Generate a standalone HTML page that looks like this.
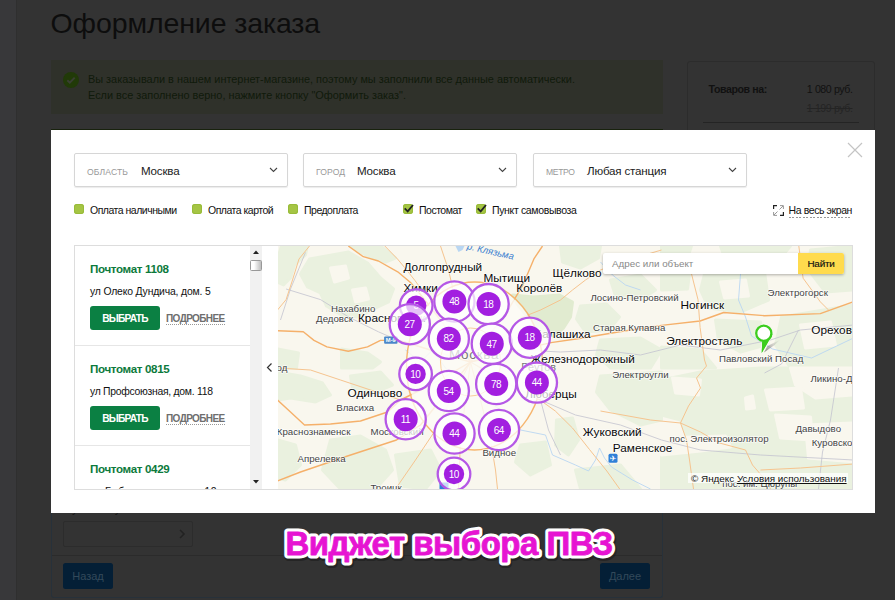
<!DOCTYPE html>
<html lang="ru"><head><meta charset="utf-8"><title>Оформление заказа</title>
<style>
html,body{margin:0;padding:0}
body{width:895px;height:600px;overflow:hidden;position:relative;background:#333;font-family:"Liberation Sans",Arial,sans-serif;color:#111}
.abs{position:absolute}
#strip{left:0;top:0;width:16px;height:600px;background:#38383a;border-right:1px solid #2f2f2f}
h1{position:absolute;left:50.500px;top:5px;margin:0;font-weight:400;font-size:28.5px;line-height:36px;color:#0d0d0d;white-space:nowrap;letter-spacing:-.1px}
#alert{left:51px;top:60px;width:612px;height:53.500px;background:#2f312a}
#alert .ic{position:absolute;left:12px;top:12px;width:16px;height:16px;border-radius:50%;background:#213a08}
#alert p{position:absolute;left:37px;margin:0;font-size:10.9px;line-height:14px;color:#0f1a0b;white-space:nowrap;letter-spacing:0}
#side{left:686.500px;top:60.500px;width:188.500px;height:200px;border:1px solid #2c2c2c;border-radius:3px;background:#333;box-sizing:border-box}
#side .l{position:absolute;left:21px;top:21px;font-size:10.6px;font-weight:700;color:#111;letter-spacing:-.4px}
#side .r{position:absolute;right:21.500px;top:21px;font-size:10.6px;color:#111;letter-spacing:-.4px}
#side .o{position:absolute;right:21.500px;top:40px;font-size:10.6px;color:#242424;text-decoration:line-through;letter-spacing:-.4px}
#side .hr{position:absolute;left:15px;right:15px;top:60px;height:1px;background:#242424}
#form{left:51px;top:500px;width:612px;height:98px;border:1px solid #27313a;border-top:0;box-sizing:border-box;border-radius:0 0 3px 3px}
#form .sel{position:absolute;left:11px;top:21px;width:128px;height:24px;border:1px solid #2c2c2c;border-radius:2px;background:#333}
#form .hr{position:absolute;left:0;right:0;top:55px;height:1px;background:#2b2b2b}
.btn{position:absolute;top:563px;width:50px;height:26px;border-radius:2.500px;background:#041f36;color:#33495a;font-size:11px;line-height:26px;text-align:center}
#modal{left:51px;top:130px;width:824px;height:383px;background:#fff}
.dd{position:absolute;top:23px;width:212px;height:32px;border:1px solid #d6d6d6;border-radius:2px;box-shadow:0 1px 1px rgba(0,0,0,.08);box-sizing:content-box}
.dd .k{position:absolute;left:12px;top:12px;font-size:8.6px;line-height:12px;color:#999;letter-spacing:.1px}
.dd .v{position:absolute;top:10px;font-size:11.6px;line-height:14px;color:#222;letter-spacing:-.2px}
.dd svg{position:absolute;right:9px;top:13px}
.cb{position:absolute;top:73px;font-size:10.5px;line-height:14px;letter-spacing:-.5px;color:#111;white-space:nowrap}
.cb i{position:absolute;left:-16px;top:1px;width:10px;height:10px;border-radius:3px;background:#a5c544;box-shadow:inset 0 0 0 1px #98bb3a}
#wrap{left:23px;top:115px;width:777px;height:243px;border:1px solid #ddd}
#list{left:0;top:0;width:175px;height:243px;overflow:hidden}
.it{position:absolute;left:0;width:175px;height:99px;border-bottom:1px solid #e6e6e6}
.it .t{position:absolute;left:15px;top:16px;font-size:11.6px;line-height:14px;font-weight:700;color:#0c7a3c;letter-spacing:-.35px;white-space:nowrap}
.it .a{position:absolute;left:15px;top:38.500px;font-size:10.4px;line-height:14px;color:#111;letter-spacing:-.28px;white-space:nowrap}
.it .b{position:absolute;left:15px;top:60px;width:70px;height:24px;border-radius:3px;background:#0b8043;color:#fff;font-size:10.2px;font-weight:700;line-height:25.500px;text-align:center;letter-spacing:-.75px}
.it .m{position:absolute;left:91px;top:67px;font-size:10px;font-weight:700;line-height:11px;color:#6e6e6e;letter-spacing:-.6px;border-bottom:1px dotted #999}
#sb{left:175px;top:0;width:11.500px;height:243px;background:#f1f1f1}
#sb .th{position:absolute;left:0;top:14px;width:9.500px;height:9px;border:1px solid #999;background:linear-gradient(90deg,#fff 30%,#bdbdbd);border-radius:1.500px}
#map{left:202.500px;top:0;width:574.500px;height:243px;overflow:hidden;background:#f8f6ee}
#map svg{position:absolute;left:0;top:0}
.hl{paint-order:stroke;stroke:#fff;stroke-width:1.6px;stroke-opacity:.7;stroke-linejoin:round}
#search{left:325.500px;top:7px;width:241px;height:21px;background:#fff;box-shadow:0 1px 3px rgba(0,0,0,.3);border-radius:2px}
#search span{position:absolute;left:9px;top:3.500px;font-size:9.8px;line-height:14px;color:#888;letter-spacing:0}
#search b{position:absolute;right:0;top:0;width:46px;height:21px;background:#ffdb4d;border-radius:0 2px 2px 0;font-size:9.9px;line-height:21px;text-align:center;color:#111;letter-spacing:-.2px;font-weight:400;-webkit-text-stroke:.18px #111}
#cap{left:270px;top:512px;width:360px;height:64px}
</style></head><body>
<div id="strip" class="abs"></div>
<h1>Оформление заказа</h1>
<div id="alert" class="abs"><span class="ic"><svg width="16" height="16" viewBox="0 0 16 16"><path d="M4.3 8.2l2.5 2.4 4.9-5" fill="none" stroke="#3a3f33" stroke-width="2"/></svg></span>
<p style="top:12px">Вы заказывали в нашем интернет-магазине, поэтому мы заполнили все данные автоматически.</p>
<p style="top:28px">Если все заполнено верно, нажмите кнопку "Оформить заказ".</p></div>
<div id="side" class="abs"><span class="l">Товаров на:</span><span class="r">1 080 руб.</span><span class="o">1 199 руб.</span><span class="hr"></span></div>
<div id="form" class="abs"><span style="position:absolute;left:12px;top:1.500px;font-size:11px;line-height:14px;color:#151515;white-space:nowrap">Пункт получения</span><span class="sel"><svg width="8" height="10" viewBox="0 0 8 10" style="position:absolute;right:6px;top:7px"><path d="M2 1l4 4-4 4" fill="none" stroke="#222" stroke-width="1.5"/></svg></span><span class="hr"></span></div>
<div class="btn" style="left:63px">Назад</div>
<div class="btn" style="left:600px">Далее</div>

<div class="abs" style="left:51px;top:128.600px;width:612px;height:1.500px;background:#18220d"></div>
<div id="modal" class="abs">
 <svg class="abs" style="left:796px;top:12px" width="16" height="16" viewBox="0 0 16 16"><path d="M1 1l14 14M15 1L1 15" stroke="#c4c4c4" stroke-width="1.2" fill="none"/></svg>
 <div class="dd" style="left:23px"><span class="k">ОБЛАСТЬ</span><span class="v" style="left:66px">Москва</span><svg width="9" height="6" viewBox="0 0 9 6"><path d="M1 1l3.5 3.5L8 1" fill="none" stroke="#444" stroke-width="1.1"/></svg></div>
 <div class="dd" style="left:252px"><span class="k">ГОРОД</span><span class="v" style="left:53px">Москва</span><svg width="9" height="6" viewBox="0 0 9 6"><path d="M1 1l3.5 3.5L8 1" fill="none" stroke="#444" stroke-width="1.1"/></svg></div>
 <div class="dd" style="left:482px"><span class="k" style="letter-spacing:-.35px">МЕТРО</span><span class="v" style="left:53px">Любая станция</span><svg width="9" height="6" viewBox="0 0 9 6"><path d="M1 1l3.5 3.5L8 1" fill="none" stroke="#444" stroke-width="1.1"/></svg></div>

 <span class="cb" style="left:39px"><i></i>Оплата наличными</span>
 <span class="cb" style="left:157px"><i></i>Оплата картой</span>
 <span class="cb" style="left:253px"><i></i>Предоплата</span>
 <span class="cb" style="left:368px"><i></i><svg class="abs" style="left:-16px;top:0" width="12" height="12" viewBox="0 0 12 12"><path d="M1.700 5.300l3 3L10 2" fill="none" stroke="#222" stroke-width="1.800"/></svg>Постомат</span>
 <span class="cb" style="left:441px;letter-spacing:-.35px"><i></i><svg class="abs" style="left:-16px;top:0" width="12" height="12" viewBox="0 0 12 12"><path d="M1.700 5.300l3 3L10 2" fill="none" stroke="#222" stroke-width="1.800"/></svg>Пункт самовывоза</span>
 <span class="cb" style="left:737.500px;letter-spacing:-.4px;line-height:13px;top:74px;padding-bottom:1px;background:repeating-linear-gradient(90deg,#999 0 2px,transparent 2px 3.500px) left bottom/100% 1px no-repeat"><svg class="abs" style="left:-15.500px;top:1px" width="11" height="11" viewBox="0 0 11 11"><path d="M.600 4V.600H4M10.400 7v3.400H7" fill="none" stroke="#222" stroke-width="1.200"/><path d="M7 .600h3.400V4M.600 7v3.400H4M10 1L6.500 4.500M1 10l3.500-3.500" fill="none" stroke="#999" stroke-width="1"/></svg>На весь экран</span>

 <div id="wrap" class="abs">
  <div id="list" class="abs">
   <div class="it" style="top:0"><span class="t">Почтомат 1108</span><span class="a" style="letter-spacing:-.17px">ул Олеко Дундича, дом. 5</span><span class="b">ВЫБРАТЬ</span><span class="m">ПОДРОБНЕЕ</span></div>
   <div class="it" style="top:100px"><span class="t">Почтомат 0815</span><span class="a">ул Профсоюзная, дом. 118</span><span class="b">ВЫБРАТЬ</span><span class="m">ПОДРОБНЕЕ</span></div>
   <div class="it" style="top:200px"><span class="t">Почтомат 0429</span><span class="a" style="top:39px;letter-spacing:.35px">ул Бибиревская, дом. 12</span><span class="b">ВЫБРАТЬ</span><span class="m">ПОДРОБНЕЕ</span></div>
  </div>
  <div id="sb" class="abs"><svg class="abs" style="left:3px;top:4px" width="6" height="4" viewBox="0 0 6 4"><path d="M0 4l3-3.500 3 3.500z" fill="#222"/></svg><span class="th"></span><svg class="abs" style="left:3px;top:234px" width="6" height="4" viewBox="0 0 6 4"><path d="M0 0l3 3.500 3-3.500z" fill="#222"/></svg></div>
  <svg class="abs" style="left:191px;top:116px" width="7" height="11" viewBox="0 0 7 11"><path d="M5.500 1.500L1.500 5.500 5.500 9.500" fill="none" stroke="#333" stroke-width="1.200"/></svg>
  <div id="map" class="abs">
   <svg width="575" height="243" viewBox="277.500 246 575 243" font-family="Liberation Sans, Arial, sans-serif">
<rect x="277" y="246" width="576" height="244" fill="#f9f7ee"/>
<polygon points="281,246 307,246 305,255 294,265 290,278 283,285 277,282 277,259" fill="#eaf1df" stroke="#eaf1df" stroke-width="3" stroke-linejoin="round"/>
<polygon points="309,259 348,252 367,263 380,278 393,289 388,302 371,310 358,317 341,315 326,306 320,293 307,287 300,274" fill="#eaf1df" stroke="#eaf1df" stroke-width="3" stroke-linejoin="round"/>
<polygon points="341,349 367,353 380,362 372,368 341,368" fill="#eaf1df" stroke="#eaf1df" stroke-width="3" stroke-linejoin="round"/>
<polygon points="277,349 298,353 296,368 277,368" fill="#eaf1df" stroke="#eaf1df" stroke-width="3" stroke-linejoin="round"/>
<polygon points="350,246 380,246 395,258 385,262 365,255" fill="#eaf1df" stroke="#eaf1df" stroke-width="3" stroke-linejoin="round"/>
<polygon points="277,372 300,376 322,383 330,395 315,402 290,398 277,400" fill="#eaf1df" stroke="#eaf1df" stroke-width="3" stroke-linejoin="round"/>
<polygon points="330,440 360,436 385,450 392,470 375,489 340,489 322,470" fill="#eaf1df" stroke="#eaf1df" stroke-width="3" stroke-linejoin="round"/>
<polygon points="277,440 295,445 300,465 285,480 277,478" fill="#eaf1df" stroke="#eaf1df" stroke-width="3" stroke-linejoin="round"/>
<polygon points="395,455 430,450 440,470 425,489 400,486" fill="#eaf1df" stroke="#eaf1df" stroke-width="3" stroke-linejoin="round"/>
<polygon points="350,376 380,372 392,385 375,392 352,388" fill="#eaf1df" stroke="#eaf1df" stroke-width="3" stroke-linejoin="round"/>
<polygon points="580,306 606,304 619,317 608,330 585,332 576,319" fill="#eaf1df" stroke="#eaf1df" stroke-width="3" stroke-linejoin="round"/>
<polygon points="560,246 600,246 598,258 580,268 562,262" fill="#eaf1df" stroke="#eaf1df" stroke-width="3" stroke-linejoin="round"/>
<polygon points="610,280 640,275 655,290 640,300 615,296" fill="#eaf1df" stroke="#eaf1df" stroke-width="3" stroke-linejoin="round"/>
<polygon points="600,340 640,338 661,350 650,368 610,368 596,355" fill="#eaf1df" stroke="#eaf1df" stroke-width="3" stroke-linejoin="round"/>
<polygon points="661,246 691,246 689,252 661,254" fill="#eaf1df" stroke="#eaf1df" stroke-width="3" stroke-linejoin="round"/>
<polygon points="661,274 689,274 687,289 661,290" fill="#eaf1df" stroke="#eaf1df" stroke-width="3" stroke-linejoin="round"/>
<polygon points="704,274 764,272 768,300 740,312 708,308 700,290" fill="#eaf1df" stroke="#eaf1df" stroke-width="3" stroke-linejoin="round"/>
<polygon points="781,317 853,305 853,368 790,368 775,345" fill="#eaf1df" stroke="#eaf1df" stroke-width="3" stroke-linejoin="round"/>
<polygon points="661,347 700,350 715,368 661,368" fill="#eaf1df" stroke="#eaf1df" stroke-width="3" stroke-linejoin="round"/>
<polygon points="810,250 853,246 853,290 825,292 808,270" fill="#eaf1df" stroke="#eaf1df" stroke-width="3" stroke-linejoin="round"/>
<polygon points="720,246 790,246 785,252 722,252" fill="#eaf1df" stroke="#eaf1df" stroke-width="3" stroke-linejoin="round"/>
<polygon points="556,420 572,418 578,440 568,455 555,445" fill="#eaf1df" stroke="#eaf1df" stroke-width="3" stroke-linejoin="round"/>
<polygon points="600,376 661,372 661,420 640,425 610,410 596,392" fill="#eaf1df" stroke="#eaf1df" stroke-width="3" stroke-linejoin="round"/>
<polygon points="520,445 545,442 550,465 530,475 515,462" fill="#eaf1df" stroke="#eaf1df" stroke-width="3" stroke-linejoin="round"/>
<polygon points="575,470 620,465 640,489 580,489" fill="#eaf1df" stroke="#eaf1df" stroke-width="3" stroke-linejoin="round"/>
<polygon points="661,380 700,372 760,368 853,368 853,489 661,489 661,455 690,445 680,420 661,415" fill="#eaf1df" stroke="#eaf1df" stroke-width="3" stroke-linejoin="round"/>
<polygon points="715,320 760,322 765,345 740,352 718,340" fill="#eaf1df" stroke="#eaf1df" stroke-width="3" stroke-linejoin="round"/>
<polygon points="512,295 533,297 559,295 572,302 570,317 563,328 553,336 540,332 529,319 520,310" fill="#e1ebd0" stroke="#e1ebd0" stroke-width="3" stroke-linejoin="round"/>
<polygon points="330,268 345,266 348,278 334,282" fill="#f9f7ee" stroke="#f9f7ee" stroke-width="3" stroke-linejoin="round"/>
<polygon points="352,290 365,288 368,299 355,302" fill="#f9f7ee" stroke="#f9f7ee" stroke-width="3" stroke-linejoin="round"/>
<polygon points="672,378 700,380 698,395 675,393" fill="#f9f7ee" stroke="#f9f7ee" stroke-width="3" stroke-linejoin="round"/>
<polygon points="765,390 800,388 803,408 770,410" fill="#f9f7ee" stroke="#f9f7ee" stroke-width="3" stroke-linejoin="round"/>
<polygon points="775,415 810,417 812,440 780,438" fill="#f9f7ee" stroke="#f9f7ee" stroke-width="3" stroke-linejoin="round"/>
<polygon points="790,368 853,368 853,395 815,398 795,385" fill="#f9f7ee" stroke="#f9f7ee" stroke-width="3" stroke-linejoin="round"/>
<polygon points="661,438 725,436 730,447 700,451 661,455" fill="#f9f7ee" stroke="#f9f7ee" stroke-width="3" stroke-linejoin="round"/>
<polygon points="805,425 853,423 853,462 808,458" fill="#f9f7ee" stroke="#f9f7ee" stroke-width="3" stroke-linejoin="round"/>
<polygon points="745,398 752,396 754,408 746,409" fill="#f9f7ee" stroke="#f9f7ee" stroke-width="3" stroke-linejoin="round"/>
<polygon points="800,325 830,322 835,345 805,348" fill="#f9f7ee" stroke="#f9f7ee" stroke-width="3" stroke-linejoin="round"/>
<polygon points="720,282 745,280 748,296 724,298" fill="#f9f7ee" stroke="#f9f7ee" stroke-width="3" stroke-linejoin="round"/>
<polygon points="455,246 464,246 462,250 458,252" fill="#b9d6f2"/>
<ellipse cx="474" cy="366" rx="64" ry="80" fill="#fbfaf4"/>
<polyline points="405,350 420,362 432,350 445,368 460,385 478,395 500,410 520,430 545,435 552,455 575,465 588,471 595,460 599,448 604,458 611,467 632,480 650,489" fill="none" stroke="#b9d6f2" stroke-width=".9" stroke-linejoin="round"/>
<polyline points="740,274 738,300 745,317 751,336 772,349 811,358 853,338" fill="none" stroke="#b9d6f2" stroke-width=".9" stroke-linejoin="round"/>
<polyline points="600,262 612,275 625,285 640,290" fill="none" stroke="#b9d6f2" stroke-width=".9" stroke-linejoin="round"/>
<polyline points="285.6,289 320,299.6 347.8,316.8 377.9,331.8 392.9,338.3 430,350" fill="none" stroke="#c3c3cf" stroke-width=".8" stroke-linejoin="round"/>
<polyline points="305,252.4 290,289 280,320" fill="none" stroke="#c3c3cf" stroke-width=".8" stroke-linejoin="round"/>
<polyline points="470,362 540,400 575,415 620,425 661,440 700,450 760,455 853,460" fill="none" stroke="#c3c3cf" stroke-width=".8" stroke-linejoin="round"/>
<polyline points="470,362 520,350 560,352 600,350 640,355 680,345 720,350 770,340 800,330 853,325" fill="none" stroke="#c3c3cf" stroke-width=".8" stroke-linejoin="round"/>
<polyline points="798,330 781,364 764,373" fill="none" stroke="#c3c3cf" stroke-width=".8" stroke-linejoin="round"/>
<polyline points="540,400 548,430 560,455" fill="none" stroke="#c3c3cf" stroke-width=".8" stroke-linejoin="round"/>
<polyline points="838,368 830,420 822,452 818,489" fill="none" stroke="#c3c3cf" stroke-width=".8" stroke-linejoin="round"/>
<polyline points="309,246 298.5,259 292,280 285.6,299.6 277,310" fill="none" stroke="#f6c48f" stroke-width="1" stroke-linejoin="round"/>
<polyline points="277,330.8 302.8,331.8 313.5,340.4 326.4,346.9 347.8,351.2 367,346.9 380,340.4 397,340.4 405.8,342.6 430,350 470,362" fill="none" stroke="#f5b06a" stroke-width="1.4" stroke-linejoin="round"/>
<polyline points="347.8,246 362.8,256.7 377.9,261 397.2,271.8 410,282.5 418,292 440,320 470,362" fill="none" stroke="#f5b06a" stroke-width="1.4" stroke-linejoin="round"/>
<polyline points="384.3,246 397,259 405.8,269.6 414.3,280.3 425,295" fill="none" stroke="#f6c48f" stroke-width="1" stroke-linejoin="round"/>
<polyline points="440,246 448,270 455,300 465,340 470,362" fill="none" stroke="#f6c48f" stroke-width="1" stroke-linejoin="round"/>
<polyline points="542,246 533.4,258.9 522.6,284.6 507.6,310 485,340 470,362" fill="none" stroke="#f5b06a" stroke-width="1.4" stroke-linejoin="round"/>
<polyline points="470,362 505,335 520,318 540,310 560,300 572,290 585,280 600,270 620,262 661,250" fill="none" stroke="#f6c48f" stroke-width="1" stroke-linejoin="round"/>
<polyline points="470,362 510,352 550.5,342.6 580.6,338.3 619,331.8 661,325.4 699.6,321 723.2,312.5 764,315.7 819.8,313.6 853,301.8" fill="none" stroke="#f5b06a" stroke-width="1.4" stroke-linejoin="round"/>
<polyline points="691,273.9 697.5,299.6 699.6,327.5 704,360 706,366 696,378 700,388 688,406 680,423 686,440 689,460 693,489" fill="none" stroke="#f6c48f" stroke-width="1" stroke-linejoin="round"/>
<polyline points="600,411 650,420 680,423" fill="none" stroke="#f6c48f" stroke-width="1" stroke-linejoin="round"/>
<polyline points="680,423 700,432 719,443 745,450 752,465 765,480 770,489" fill="none" stroke="#f6c48f" stroke-width="1" stroke-linejoin="round"/>
<polyline points="798.3,246 802.6,278.2 819.8,301.8 828.4,310.4" fill="none" stroke="#f6c48f" stroke-width="1" stroke-linejoin="round"/>
<polyline points="470,362 500,380 539.8,400.2 554.8,411 572,428 589,449.5 606.3,471 619.2,489" fill="none" stroke="#f6c48f" stroke-width="1" stroke-linejoin="round"/>
<polyline points="470,362 480,400 490,440 495,470 497,489" fill="none" stroke="#f6c48f" stroke-width="1" stroke-linejoin="round"/>
<polyline points="470,362 465,400 460,440 458,489" fill="none" stroke="#f6c48f" stroke-width="1" stroke-linejoin="round"/>
<polyline points="470,362 450,400 435,430 415,460 395,489" fill="none" stroke="#f6c48f" stroke-width="1" stroke-linejoin="round"/>
<polyline points="470,362 440,400 420,425 396,440 344,457 300,472 277,481" fill="none" stroke="#f5b06a" stroke-width="1.4" stroke-linejoin="round"/>
<polyline points="470,362 430,385 400,400 387,412 360,421 330,424 304,425 290,412 277,400" fill="none" stroke="#f5b06a" stroke-width="1.4" stroke-linejoin="round"/>
<polyline points="400,400 370,390 340,380 310,370 277,368" fill="none" stroke="#f6c48f" stroke-width="1" stroke-linejoin="round"/>
<polyline points="760,470 800,468 853,464" fill="none" stroke="#f6c48f" stroke-width="1" stroke-linejoin="round"/>
<ellipse cx="474" cy="366" rx="67" ry="83" fill="#fbfaf4" fill-opacity=".85"/>
<ellipse cx="474" cy="366" rx="68" ry="84" fill="none" stroke="#f6b56e" stroke-width="1.4"/>
<ellipse cx="470" cy="362" rx="30" ry="34" fill="none" stroke="#f8cf9d" stroke-width="1"/>
<text x="403" y="271" font-size="11.8" fill="#0a0a0a" text-anchor="start" class="hl">Долгопрудный</text>
<text x="403" y="292" font-size="11.8" fill="#0a0a0a" text-anchor="start" class="hl">Химки</text>
<text x="483" y="281.5" font-size="11.8" fill="#0a0a0a" text-anchor="start" class="hl">Мытищи</text>
<text x="515.8" y="292" font-size="11.8" fill="#0a0a0a" text-anchor="start" class="hl">Королёв</text>
<text x="552" y="276.7" font-size="11.8" fill="#0a0a0a" text-anchor="start" class="hl">Щёлково</text>
<text x="357.5" y="322" font-size="11.8" fill="#0a0a0a" text-anchor="start" class="hl">Красногорск</text>
<text x="534" y="338.3" font-size="11.8" fill="#0a0a0a" text-anchor="start" class="hl">Балашиха</text>
<text x="530" y="363" font-size="11.8" fill="#0a0a0a" text-anchor="start" class="hl">Железнодорожный</text>
<text x="576.3" y="398" font-size="11.8" fill="#0a0a0a" text-anchor="end" class="hl">Люберцы</text>
<text x="347" y="397" font-size="11.8" fill="#0a0a0a" text-anchor="start" class="hl">Одинцово</text>
<text x="582.3" y="436.2" font-size="11.8" fill="#0a0a0a" text-anchor="start" class="hl">Жуковский</text>
<text x="612.3" y="451.7" font-size="11.8" fill="#0a0a0a" text-anchor="start" class="hl">Раменское</text>
<text x="680" y="309.3" font-size="11.8" fill="#0a0a0a" text-anchor="start" class="hl">Ногинск</text>
<text x="665.7" y="344.7" font-size="11.8" fill="#0a0a0a" text-anchor="start" class="hl">Электросталь</text>
<text x="810.8" y="334" font-size="11.8" fill="#0a0a0a" text-anchor="start" class="hl">Орехово-Зуево</text>
<text x="330.6" y="312" font-size="9.7" fill="#444" text-anchor="start" class="hl">Нахабино</text>
<text x="315.6" y="321.5" font-size="9.7" fill="#444" text-anchor="start" class="hl">Дедовск</text>
<text x="335.7" y="410.6" font-size="9.7" fill="#444" text-anchor="start" class="hl">Власиха</text>
<text x="349.9" y="435" font-size="9.7" fill="#444" text-anchor="end" class="hl">Краснознаменск</text>
<text x="370" y="435" font-size="9.7" fill="#444" text-anchor="start" class="hl">Московский</text>
<text x="297" y="462.4" font-size="9.7" fill="#444" text-anchor="start" class="hl">Апрелевка</text>
<text x="370" y="490.5" font-size="9.7" fill="#444" text-anchor="start" class="hl">Троицк</text>
<text x="590" y="301.4" font-size="9.7" fill="#444" text-anchor="start" class="hl">Лосино-Петровский</text>
<text x="592.4" y="331.4" font-size="9.7" fill="#444" text-anchor="start" class="hl">Старая Купавна</text>
<text x="611.7" y="377.7" font-size="9.7" fill="#444" text-anchor="start" class="hl">Электроугли</text>
<text x="767" y="295.8" font-size="9.7" fill="#444" text-anchor="start" class="hl">Электрогорск</text>
<text x="718.5" y="361.9" font-size="9.7" fill="#444" text-anchor="start" class="hl">Павловский Посад</text>
<text x="810" y="382" font-size="9.7" fill="#444" text-anchor="start" class="hl">Ликино-Дулёво</text>
<text x="795" y="432" font-size="9.7" fill="#444" text-anchor="start" class="hl">Давыдово</text>
<text x="811.2" y="445.7" font-size="9.7" fill="#444" text-anchor="start" class="hl">Куровское</text>
<text x="669" y="441.6" font-size="9.7" fill="#444" text-anchor="start" class="hl">пос. Электроизолятор</text>
<text x="721.7" y="487" font-size="9.7" fill="#444" text-anchor="start" class="hl">пос. им. Цюрупы</text>
<text x="481.9" y="456.4" font-size="9.7" fill="#444" text-anchor="start" class="hl">Видное</text>
<text x="286.9" y="371.2" font-size="9.7" fill="#444" text-anchor="end" class="hl">Звенигород</text>
<text x="466" y="249" font-size="9.500" fill="#3b7fd0" font-style="italic" transform="rotate(13 466 249)">р. Клязьма</text>
<text x="448.400" y="358.500" font-size="13.500" fill="#777" letter-spacing=".7" class="hl">Москва</text>
<text x="520.800" y="371" font-size="10.800" fill="#777" class="hl">Реутов</text>
<rect x="383.600" y="336.500" width="13.400" height="7.200" rx="1" fill="#4b87c9"/><text x="390.300" y="342.300" font-size="5.800" font-weight="700" fill="#fff" text-anchor="middle">М-9</text>
<rect x="608" y="453.800" width="9" height="9" rx="1.500" fill="#2f80d8"/><text x="612.500" y="461.300" font-size="8" fill="#fff" text-anchor="middle" font-family="DejaVu Sans, sans-serif">✈</text>
<rect x="439" y="482.500" width="9" height="7" rx="1" fill="#2f80d8"/>
<g><circle cx="415.7" cy="305.59999999999997" r="16.3" fill="#fff" fill-opacity=".72" stroke="#b558e6" stroke-width="2.3"/><circle cx="415.7" cy="305.59999999999997" r="10.2" fill="#a21fe0"/><text x="415.7" y="309.29999999999995" text-anchor="middle" font-size="10" letter-spacing="-.6" fill="#fff" dx="-.3">5</text></g>
<g><circle cx="453.9" cy="301.5" r="20.1" fill="#fff" fill-opacity=".72" stroke="#b558e6" stroke-width="2.3"/><circle cx="453.9" cy="301.5" r="12" fill="#a21fe0"/><text x="453.9" y="305.2" text-anchor="middle" font-size="10" letter-spacing="-.6" fill="#fff" dx="-.3">48</text></g>
<g><circle cx="488.1" cy="304.09999999999997" r="20.1" fill="#fff" fill-opacity=".72" stroke="#b558e6" stroke-width="2.3"/><circle cx="488.1" cy="304.09999999999997" r="12" fill="#a21fe0"/><text x="488.1" y="307.79999999999995" text-anchor="middle" font-size="10" letter-spacing="-.6" fill="#fff" dx="-.3">18</text></g>
<g><circle cx="409.3" cy="324.2" r="20.1" fill="#fff" fill-opacity=".72" stroke="#b558e6" stroke-width="2.3"/><circle cx="409.3" cy="324.2" r="12" fill="#a21fe0"/><text x="409.3" y="327.9" text-anchor="middle" font-size="10" letter-spacing="-.6" fill="#fff" dx="-.3">27</text></g>
<g><circle cx="448.3" cy="338.7" r="20.1" fill="#fff" fill-opacity=".72" stroke="#b558e6" stroke-width="2.3"/><circle cx="448.3" cy="338.7" r="12" fill="#a21fe0"/><text x="448.3" y="342.4" text-anchor="middle" font-size="10" letter-spacing="-.6" fill="#fff" dx="-.3">82</text></g>
<g><circle cx="491.3" cy="343.79999999999995" r="20.1" fill="#fff" fill-opacity=".72" stroke="#b558e6" stroke-width="2.3"/><circle cx="491.3" cy="343.79999999999995" r="12" fill="#a21fe0"/><text x="491.3" y="347.49999999999994" text-anchor="middle" font-size="10" letter-spacing="-.6" fill="#fff" dx="-.3">47</text></g>
<g><circle cx="529.3" cy="337.7" r="20.1" fill="#fff" fill-opacity=".72" stroke="#b558e6" stroke-width="2.3"/><circle cx="529.3" cy="337.7" r="12" fill="#a21fe0"/><text x="529.3" y="341.4" text-anchor="middle" font-size="10" letter-spacing="-.6" fill="#fff" dx="-.3">18</text></g>
<g><circle cx="415.1" cy="373.9" r="16.3" fill="#fff" fill-opacity=".72" stroke="#b558e6" stroke-width="2.3"/><circle cx="415.1" cy="373.9" r="10.2" fill="#a21fe0"/><text x="415.1" y="377.59999999999997" text-anchor="middle" font-size="10" letter-spacing="-.6" fill="#fff" dx="-.3">10</text></g>
<g><circle cx="448.3" cy="391.0" r="20.1" fill="#fff" fill-opacity=".72" stroke="#b558e6" stroke-width="2.3"/><circle cx="448.3" cy="391.0" r="12" fill="#a21fe0"/><text x="448.3" y="394.7" text-anchor="middle" font-size="10" letter-spacing="-.6" fill="#fff" dx="-.3">54</text></g>
<g><circle cx="495.7" cy="384.0" r="20.1" fill="#fff" fill-opacity=".72" stroke="#b558e6" stroke-width="2.3"/><circle cx="495.7" cy="384.0" r="12" fill="#a21fe0"/><text x="495.7" y="387.7" text-anchor="middle" font-size="10" letter-spacing="-.6" fill="#fff" dx="-.3">78</text></g>
<g><circle cx="536.4" cy="382.59999999999997" r="20.1" fill="#fff" fill-opacity=".72" stroke="#b558e6" stroke-width="2.3"/><circle cx="536.4" cy="382.59999999999997" r="12" fill="#a21fe0"/><text x="536.4" y="386.29999999999995" text-anchor="middle" font-size="10" letter-spacing="-.6" fill="#fff" dx="-.3">44</text></g>
<g><circle cx="405.2" cy="419.29999999999995" r="20.1" fill="#fff" fill-opacity=".72" stroke="#b558e6" stroke-width="2.3"/><circle cx="405.2" cy="419.29999999999995" r="12" fill="#a21fe0"/><text x="405.2" y="422.99999999999994" text-anchor="middle" font-size="10" letter-spacing="-.6" fill="#fff" dx="-.3">11</text></g>
<g><circle cx="454.0" cy="433.5" r="20.1" fill="#fff" fill-opacity=".72" stroke="#b558e6" stroke-width="2.3"/><circle cx="454.0" cy="433.5" r="12" fill="#a21fe0"/><text x="454.0" y="437.2" text-anchor="middle" font-size="10" letter-spacing="-.6" fill="#fff" dx="-.3">44</text></g>
<g><circle cx="498.5" cy="430.0" r="20.1" fill="#fff" fill-opacity=".72" stroke="#b558e6" stroke-width="2.3"/><circle cx="498.5" cy="430.0" r="12" fill="#a21fe0"/><text x="498.5" y="433.7" text-anchor="middle" font-size="10" letter-spacing="-.6" fill="#fff" dx="-.3">64</text></g>
<g><circle cx="453.5" cy="474.0" r="16.3" fill="#fff" fill-opacity=".72" stroke="#b558e6" stroke-width="2.3"/><circle cx="453.5" cy="474.0" r="10.2" fill="#a21fe0"/><text x="453.5" y="477.7" text-anchor="middle" font-size="10" letter-spacing="-.6" fill="#fff" dx="-.3">10</text></g>
<defs><linearGradient id="sh" x1="0" y1="1" x2="1" y2="0"><stop offset="0" stop-color="#555" stop-opacity=".7"/><stop offset="1" stop-color="#888" stop-opacity="0"/></linearGradient></defs>
<polygon points="763.500,352.500 767,346 780,339.500 774,345" fill="url(#sh)"/>
<polygon points="761.800,341 772.200,334 761.200,353" fill="#3ccd1e" stroke="#fff" stroke-width="1" stroke-linejoin="round" paint-order="stroke"/>
<circle cx="763.300" cy="333.200" r="8.900" fill="#fff"/>
<polygon points="761.800,341 772.200,334 761.200,353" fill="#3ccd1e"/>
<circle cx="763.300" cy="333.200" r="7.600" fill="#fff" stroke="#3ccd1e" stroke-width="2.300"/>
   </svg>
   <div id="search" class="abs"><span>Адрес или объект</span><b>Найти</b></div>
   <div class="abs" style="left:410.500px;top:227px;width:160px;height:10px;background:rgba(255,255,255,.75)"></div>
   <div class="abs" style="left:413.500px;top:225.500px;font-size:9.9px;line-height:13px;color:#111;white-space:nowrap">© Яндекс <span style="text-decoration:underline">Условия использования</span></div>
  </div>
 </div>
</div>

<svg id="cap" class="abs" viewBox="270 512 360 64" font-family="Liberation Sans, Arial, sans-serif" font-size="33" font-weight="700" letter-spacing="-.5" stroke-linejoin="round"><text x="285.500" y="555" fill="#1a1a1a" stroke="#1a1a1a" stroke-width="8" opacity=".55" transform="translate(.8,1.600)">Виджет выбора ПВЗ</text><text x="285.500" y="555" fill="#fff" stroke="#fff" stroke-width="6.800">Виджет выбора ПВЗ</text><text x="285.500" y="555" fill="#e614d2" stroke="#e614d2" stroke-width=".8">Виджет выбора ПВЗ</text></svg>
</body></html>
